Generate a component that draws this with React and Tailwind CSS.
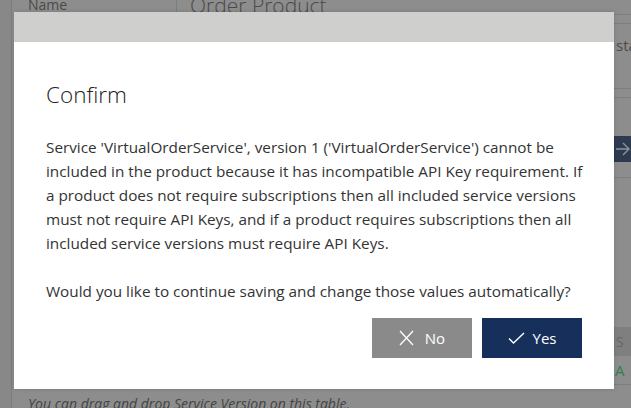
export default function App() {
  return (
    <div
      className="relative w-[631px] h-[408px] overflow-hidden bg-[#8d8d8d] flex"
      style={{ fontFamily: '"Open Sans", "Noto Sans", sans-serif' }}
    >
      {/* page behind the modal (already dimmed) */}
      <div className="w-[12px] h-full bg-[#888888] border-r border-[#7c7c7c]" />
      <div className="flex-1 flex flex-col">
        <div className="flex h-[44px] -mt-[10px]">
          <div className="w-[165px] border-r border-[#7d7d7d] pl-[16px] pt-[4px] text-[14px] text-[#4a4a4a]">
            Name
          </div>
          <div className="pl-[13px] pt-[0px] text-[21px] font-light text-[#4a4a4a]">Order Product</div>
        </div>
        <div className="flex-1" />
        <div className="h-[22px] pl-[16px] pt-[7px] text-[14px] italic text-[#444] whitespace-nowrap">
          You can drag and drop Service Version on this table.
        </div>
      </div>
      <div className="w-[17px] flex flex-col">
        <div className="h-[15px] shrink-0 border-b border-[#7d7d7d]" />
        <div className="h-[9px] shrink-0 border-b border-[#7d7d7d]" />
        <div className="h-[42px] shrink-0 flex items-center pl-[2px] text-[15px] text-[#4a4a4a] whitespace-nowrap">
          sta
        </div>
        <div className="h-[23px] shrink-0 border-b border-[#7d7d7d]" />
        <div className="h-[9px] shrink-0 border-b border-[#7d7d7d]" />
        <div className="h-[38px] shrink-0" />
        <div className="h-[26px] shrink-0 bg-[#2e3a50] flex items-center pl-[1px]">
          <svg width="16" height="14" viewBox="0 0 16 14" fill="none" stroke="#8e939c" strokeWidth="1.4">
            <path d="M1 7h13M8 1l6 6-6 6" />
          </svg>
        </div>
        <div className="h-[16px] shrink-0 border-b border-[#7d7d7d]" />
        <div className="h-[149px] shrink-0" />
        <div className="h-[29px] shrink-0 bg-[#7f7f7f] flex items-center pl-[2px] text-[14px] text-[#666]">S</div>
        <div className="h-[29px] shrink-0 border-b border-[#7d7d7d] flex items-center pl-[1px] text-[15px] text-[#2f7f4c]">
          A
        </div>
      </div>

      {/* modal */}
      <div className="absolute left-[14px] top-[12px] w-[600px] h-[377px] bg-white flex flex-col shadow-[0_0_4px_rgba(0,0,0,0.15)]">
        <div className="h-[30px] bg-[#cfcfcd]" />
        <div className="flex-1 flex flex-col px-[32px] pt-[37px] pb-[31px]">
          <h2 className="text-[22.5px] leading-[32px] font-light text-[#222]">Confirm</h2>
          <div className="mt-[24px] -mr-[8px] text-[15.3px] leading-[24px] text-[#333]">
            <p>
              Service 'VirtualOrderService', version 1 ('VirtualOrderService') cannot be included in the product
              because it has incompatible API Key requirement. If a product does not require subscriptions then all
              included service versions must not require API Keys, and if a product requires subscriptions then all
              included service versions must require API Keys.
            </p>
            <p className="mt-[24px]">Would you like to continue saving and change those values automatically?</p>
          </div>
          <div className="mt-auto flex justify-end gap-[10px]">
            <button className="w-[100px] h-[40px] bg-[#8a8a8a] text-white text-[15px] flex items-center justify-center gap-[11px]">
              <svg width="15" height="16" viewBox="0 0 15 16" fill="none" stroke="white" strokeWidth="1.3">
                <path d="M1 1l13 14M14 1L1 15" />
              </svg>
              <span>No</span>
            </button>
            <button className="w-[100px] h-[40px] bg-[#17305b] text-white text-[15px] flex items-center justify-center gap-[8px]">
              <svg width="17" height="12" viewBox="0 0 17 12" fill="none" stroke="white" strokeWidth="1.4">
                <path d="M1 6.5l4.5 4.5L16 1" />
              </svg>
              <span>Yes</span>
            </button>
          </div>
        </div>
      </div>
    </div>
  );
}
